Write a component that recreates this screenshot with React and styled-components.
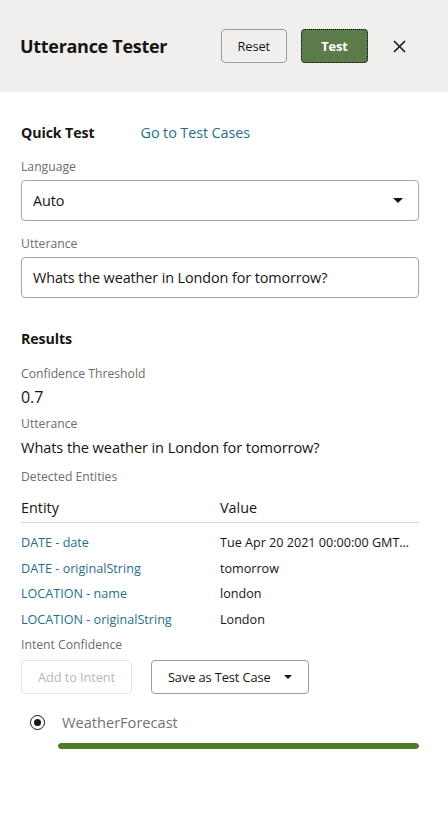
import React from "react";
import styled, { createGlobalStyle } from "styled-components";

const GlobalStyle = createGlobalStyle`
  html, body {
    margin: 0;
    padding: 0;
    background: #ffffff;
    font-family: "Open Sans", "Noto Sans", Arial, sans-serif;
    color: #161513;
  }
  * { box-sizing: border-box; }
`;

const entities = [
  { name: "DATE - date", value: "Tue Apr 20 2021 00:00:00 GMT+0100 (British Summer Time)" },
  { name: "DATE - originalString", value: "tomorrow" },
  { name: "LOCATION - name", value: "london" },
  { name: "LOCATION - originalString", value: "London" },
];

function App() {
  return (
    <Panel>
      <GlobalStyle />
      <Header>
        <Title>Utterance Tester</Title>
        <HeaderActions>
          <Button>Reset</Button>
          <Button primary>Test</Button>
          <CloseButton aria-label="close">
            <svg width="13" height="13" viewBox="0 0 13 13">
              <path d="M1 1 L12 12 M12 1 L1 12" stroke="#161513" strokeWidth="1.6" />
            </svg>
          </CloseButton>
        </HeaderActions>
      </Header>

      <Body>
        <TabRow>
          <SectionTitle>Quick Test</SectionTitle>
          <Link>Go to Test Cases</Link>
        </TabRow>

        <Label top={15}>Language</Label>
        <Field>
          <span>Auto</span>
          <Caret />
        </Field>

        <Label top={14}>Utterance</Label>
        <Field>Whats the weather in London for tomorrow?</Field>

        <SectionTitle top={31}>Results</SectionTitle>

        <Label top={16}>Confidence Threshold</Label>
        <Value big>0.7</Value>

        <Label top={8}>Utterance</Label>
        <Value>Whats the weather in London for tomorrow?</Value>

        <Label top={11}>Detected Entities</Label>

        <Table>
          <HeadCell>Entity</HeadCell>
          <HeadCell>Value</HeadCell>
          {entities.map((e) => (
            <React.Fragment key={e.name}>
              <EntityCell>{e.name}</EntityCell>
              <ValueCell>{e.value}</ValueCell>
            </React.Fragment>
          ))}
        </Table>

        <Label top={4}>Intent Confidence</Label>
        <ButtonRow>
          <Button disabled>Add to Intent</Button>
          <Button wide>
            Save as Test Case
            <Caret small />
          </Button>
        </ButtonRow>

        <IntentRow>
          <Radio />
          <IntentName>WeatherForecast</IntentName>
        </IntentRow>
        <Bar>
          <BarFill style={{ width: "100%" }} />
        </Bar>
      </Body>
    </Panel>
  );
}

const Panel = styled.div`
  width: 448px;
  min-height: 822px;
  background: #fff;
`;

const Header = styled.div`
  height: 92px;
  background: #f1efed;
  display: flex;
  align-items: center;
  justify-content: space-between;
  padding: 0 32px 0 20px;
`;

const Title = styled.h1`
  margin: 0;
  font-size: 18px;
  font-weight: 700;
  color: #161513;
  letter-spacing: -0.3px;
`;

const HeaderActions = styled.div`
  display: flex;
  align-items: center;
  gap: 14px;
`;

const Button = styled.button`
  height: 34px;
  padding: 0 16px;
  min-width: ${(p) => (p.primary ? "67px" : "66px")};
  font-family: inherit;
  font-size: 12.8px;
  letter-spacing: -0.1px;
  font-weight: ${(p) => (p.primary ? 700 : 400)};
  border-radius: 4px;
  display: inline-flex;
  align-items: center;
  justify-content: center;
  gap: 14px;
  cursor: pointer;
  color: ${(p) => (p.primary ? "#fff" : p.disabled ? "#b9b7b4" : "#161513")};
  background: ${(p) => (p.primary ? "#5b7b4b" : p.disabled ? "#fff" : "transparent")};
  border: ${(p) =>
    p.primary
      ? "1px dotted #000"
      : p.disabled
      ? "1px solid #e6e4e1"
      : "1px solid #9e9b97"};
  outline: none;
`;

const CloseButton = styled.button`
  width: 34px;
  height: 34px;
  border: none;
  background: transparent;
  display: flex;
  align-items: center;
  justify-content: center;
  padding: 0;
`;

const Body = styled.div`
  padding: 31px 29px 40px 21px;
  display: flex;
  flex-direction: column;
`;

const TabRow = styled.div`
  display: flex;
  align-items: baseline;
  gap: 46px;
`;

const SectionTitle = styled.div`
  font-size: 14.2px;
  font-weight: 700;
  color: #161513;
  line-height: 20px;
  letter-spacing: -0.1px;
  margin-top: ${(p) => p.top || 0}px;
`;

const Link = styled.a`
  font-size: 14.4px;
  color: #1f6f8b;
  line-height: 20px;
  letter-spacing: -0.1px;
`;

const Label = styled.div`
  font-size: 12.2px;
  color: #6f6c69;
  line-height: 17px;
  margin-top: ${(p) => (p.top === undefined ? 14 : p.top)}px;
  margin-bottom: 5px;
`;

const Field = styled.div`
  height: 41px;
  border: 1px solid #a9a6a2;
  border-radius: 4px;
  padding: 0 15px 0 11px;
  display: flex;
  align-items: center;
  justify-content: space-between;
  font-size: 14.4px;
  letter-spacing: -0.1px;
  color: #161513;
`;

const Caret = styled.span`
  width: 0;
  height: 0;
  border-left: ${(p) => (p.small ? 4 : 5)}px solid transparent;
  border-right: ${(p) => (p.small ? 4 : 5)}px solid transparent;
  border-top: ${(p) => (p.small ? 4 : 5)}px solid #161513;
`;

const Value = styled.div`
  font-size: ${(p) => (p.big ? 16 : 14.6)}px;
  letter-spacing: -0.1px;
  color: #161513;
  line-height: 20px;
`;

const Table = styled.div`
  display: grid;
  grid-template-columns: 199px 1fr;
  margin-top: 8px;
  font-size: 12.6px;
`;

const HeadCell = styled.div`
  font-size: 14.4px;
  color: #161513;
  line-height: 20px;
  padding-bottom: 4px;
  border-bottom: 1px solid #dcdad7;
  margin-bottom: 7px;
`;

const EntityCell = styled.div`
  color: #1f6f8b;
  line-height: 25.5px;
  white-space: nowrap;
`;

const ValueCell = styled.div`
  color: #161513;
  line-height: 25.5px;
  white-space: nowrap;
  overflow: hidden;
  text-overflow: ellipsis;
  padding-right: 4px;
`;

const ButtonRow = styled.div`
  display: flex;
  gap: 19px;
  margin-top: 2px;
`;

const IntentRow = styled.div`
  display: flex;
  align-items: center;
  gap: 17px;
  margin-top: 18px;
  padding-left: 9px;
`;

const Radio = styled.span`
  width: 15px;
  height: 15px;
  border-radius: 50%;
  border: 1.5px solid #161513;
  display: flex;
  align-items: center;
  justify-content: center;
  &::after {
    content: "";
    width: 7px;
    height: 7px;
    border-radius: 50%;
    background: #161513;
  }
`;

const IntentName = styled.div`
  font-size: 14.6px;
  color: #75726f;
`;

const Bar = styled.div`
  margin: 11px 0 0 37px;
  height: 6px;
  border-radius: 3px;
  background: #e4e2df;
  overflow: hidden;
`;

const BarFill = styled.div`
  height: 100%;
  background: #4f7a28;
  border-radius: 3px;
`;

export default App;
